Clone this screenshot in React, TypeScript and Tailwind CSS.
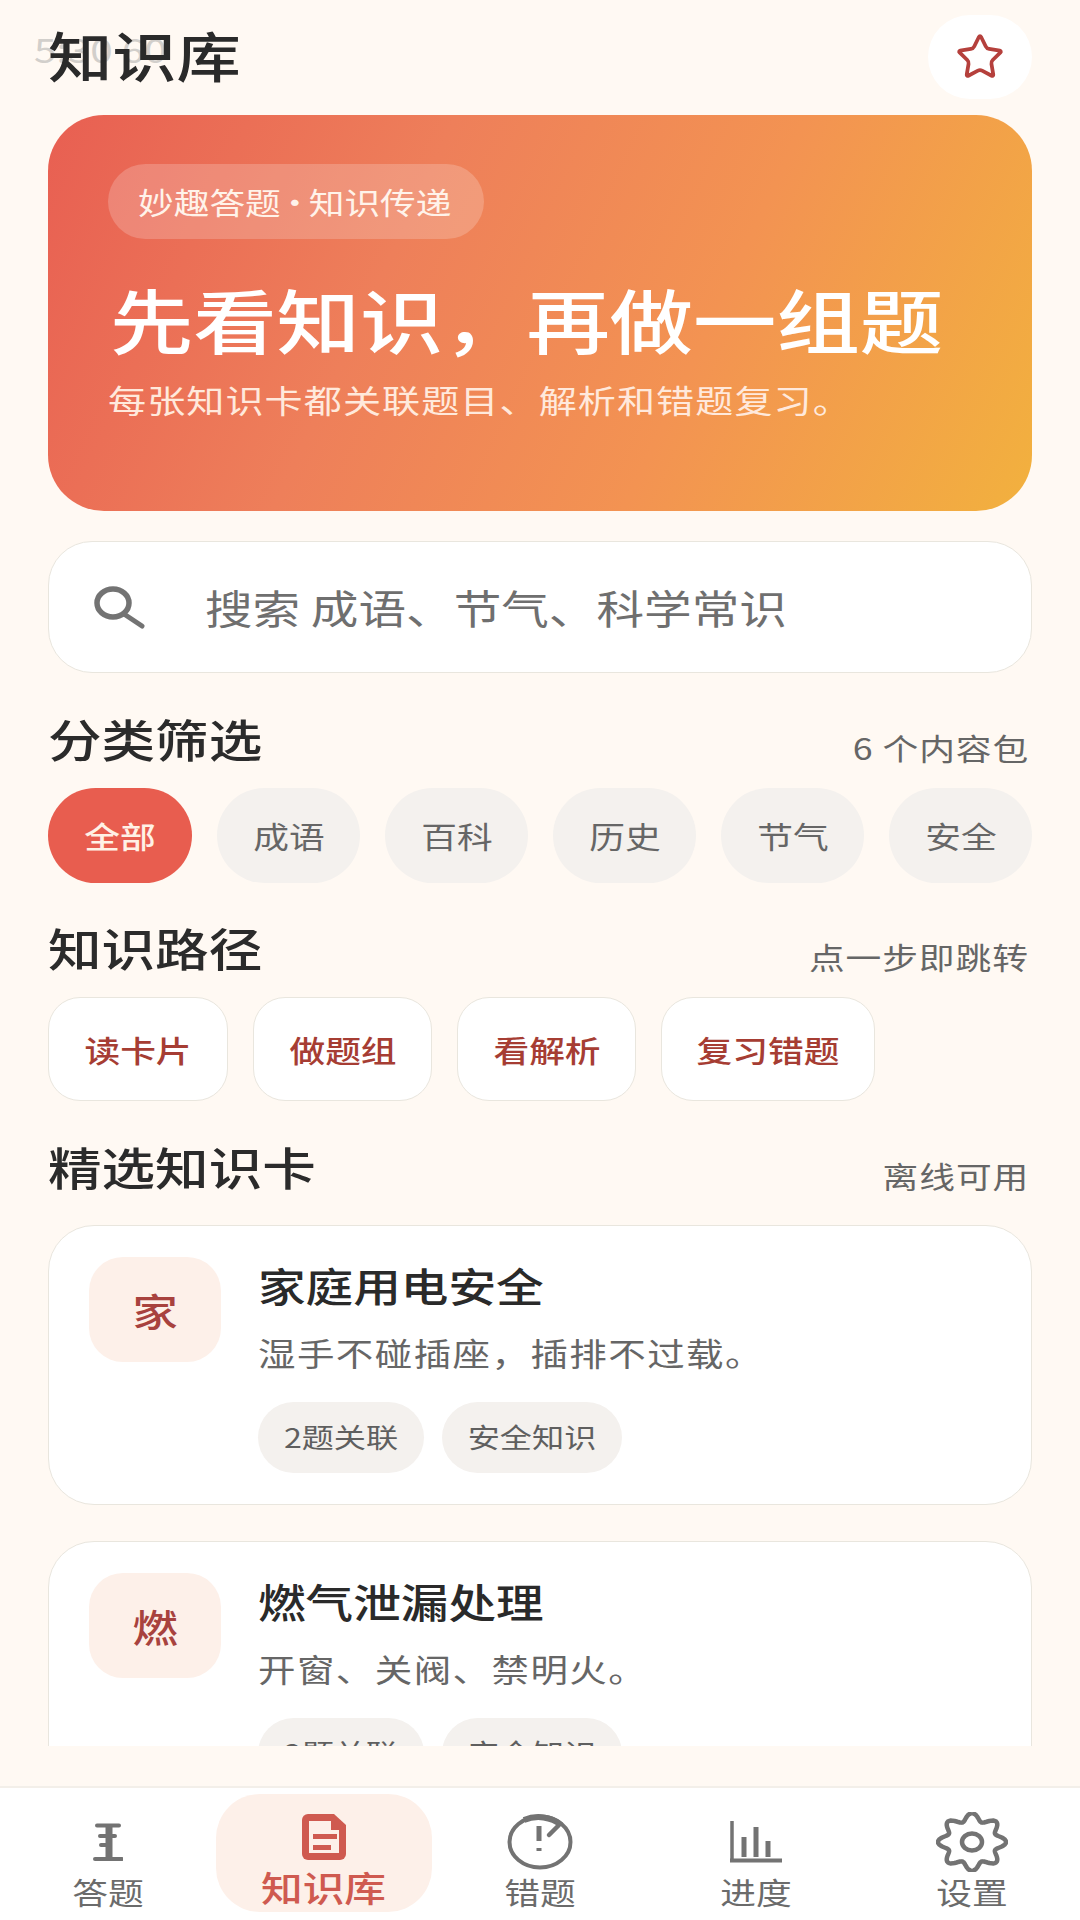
import React from "react";
import { Star } from "lucide-react";

const CJK = "font-['Noto_Sans_CJK_SC','Noto_Sans',sans-serif]";

const filters = ["全部", "成语", "百科", "历史", "节气", "安全"];
const steps = [
  { name: "读卡片", width: "w-[180px]" },
  { name: "做题组", width: "w-[179px]" },
  { name: "看解析", width: "w-[179px]" },
  { name: "复习错题", width: "w-[214px]" },
];
const cards = [
  { mark: "家", title: "家庭用电安全", desc: "湿手不碰插座，插排不过载。" },
  { mark: "燃", title: "燃气泄漏处理", desc: "开窗、关阀、禁明火。" },
];

// the text in this design runs wider than the font's normal proportions
const Wide = ({ children, className = "origin-left" }: { children: React.ReactNode; className?: string }) => (
  <span className={`inline-block whitespace-nowrap scale-x-[1.19] ${className}`}>{children}</span>
);

const SectionHead = ({ title, note }: { title: string; note: string }) => (
  <div className="flex items-end justify-between">
    <h2 className="text-[45px] leading-[60px] font-medium text-[#2b2b2b]">
      <Wide>{title}</Wide>
    </h2>
    <span className="text-[30px] leading-[40px] text-[#666] tracking-[0.8px] pr-[3px] pb-[2px]">
      <Wide className="origin-right">{note}</Wide>
    </span>
  </div>
);

const SearchIcon = () => (
  <svg width="54" height="44" viewBox="0 0 54 44" fill="none" stroke="#737373" strokeLinecap="round">
    <ellipse cx="20" cy="18" rx="16" ry="14" strokeWidth="5.5" />
    <path d="M31 29l18 12" strokeWidth="5" />
  </svg>
);

const QuizIcon = () => (
  <svg width="30" height="38" viewBox="0 0 30 38" fill="none" stroke="#737373" strokeLinecap="round">
    <path d="M4 2.5h22" strokeWidth="4" />
    <path d="M16 3v33" strokeWidth="7" strokeLinecap="butt" />
    <path d="M7 13h15M8 22h8" strokeWidth="4" />
    <path d="M2 36h27" strokeWidth="4" />
  </svg>
);

const DocIcon = () => (
  <svg width="44" height="46" viewBox="0 0 44 46" fill="none">
    <path d="M6 0h26l12 11v29a6 6 0 0 1-6 6H6a6 6 0 0 1-6-6V6a6 6 0 0 1 6-6z" fill="#cf5a50" />
    <path d="M7 7h22v9h8v23H7z" fill="#fdf0e9" />
    <path d="M11 20h24v5H11zM11 31h18v5H11z" fill="#cf5a50" />
  </svg>
);

const MistakeIcon = () => (
  <svg width="68" height="56" viewBox="0 0 68 56" fill="none" stroke="#737373" strokeLinecap="round">
    <ellipse cx="34" cy="28" rx="30.5" ry="25.5" strokeWidth="4" />
    <path d="M33 12v15M33 34v3" strokeWidth="5" strokeLinecap="butt" />
    <path d="M43 21l10-10" strokeWidth="4.5" />
    <path d="M18 6a31 25 0 0 1 37 5" strokeWidth="6" strokeLinecap="butt" />
  </svg>
);

const BarsIcon = () => (
  <svg width="54" height="42" viewBox="0 0 54 42" fill="none" stroke="#737373">
    <path d="M3 0v39" strokeWidth="3.5" />
    <path d="M15 16v20M27 6v30M39 20v16" strokeWidth="5" />
    <path d="M1 39.5h52" strokeWidth="4" />
  </svg>
);

// eight rounded lobes, squashed a little like the rest of the picture
const gearPath = Array.from({ length: 145 }, (_, i) => {
  const t = (i / 144) * Math.PI * 2;
  const r = 1 + 0.155 * Math.cos(8 * t);
  const x = 36 + 29.5 * r * Math.sin(t);
  const y = 30 - 25 * r * Math.cos(t);
  return `${i === 0 ? "M" : "L"}${x.toFixed(2)} ${y.toFixed(2)}`;
}).join("");

const GearIcon = () => (
  <svg width="72" height="60" viewBox="0 0 72 60" fill="none" stroke="#737373">
    <path d={gearPath} strokeWidth="4.5" strokeLinejoin="round" />
    <ellipse cx="36" cy="30" rx="10" ry="8.5" strokeWidth="4.5" />
  </svg>
);

const navItems = [
  { label: "答题", icon: <QuizIcon /> },
  { label: "知识库", icon: <DocIcon />, active: true },
  { label: "错题", icon: <MistakeIcon /> },
  { label: "进度", icon: <BarsIcon /> },
  { label: "设置", icon: <GearIcon /> },
];

export default function App() {
  return (
    <div className={`${CJK} relative w-[1080px] h-[1920px] overflow-hidden bg-[#fff9f3] flex flex-col`}>
      {/* leftover status bar time under the title */}
      <span className="absolute left-[34px] top-[27px] text-[34px] leading-[44px] text-[#d2cfcb]">
        <Wide>5:30 60</Wide>
      </span>

      <div className="h-[1746px] overflow-hidden px-[48px] shrink-0 relative">
        <header className="flex items-center justify-between h-[115px]">
          <h1 className="text-[54px] leading-[64px] font-medium text-[#2a2a2a] mt-[-6px]">
            <Wide>知识库</Wide>
          </h1>
          <button className="w-[104px] h-[84px] rounded-full bg-white flex items-center justify-center mt-[-1px]">
            <Star size={50} strokeWidth={1.8} color="#b5403c" />
          </button>
        </header>

        <section className="h-[396px] rounded-[56px] px-[60px] pt-[49px] bg-[linear-gradient(115deg,#e85f52_0%,#ee7f5a_35%,#f39352_65%,#f2b13e_100%)]">
          <span className="inline-flex items-center w-[376px] h-[75px] pl-[30px] rounded-full bg-white/20 text-[30px] [word-spacing:-10px] text-[#fff3ea]">
            <Wide>妙趣答题 · 知识传递</Wide>
          </span>
          <h2 className="mt-[38px] text-[70px] leading-[84px] font-medium text-white ml-[2px]">
            <Wide>先看知识，再做一组题</Wide>
          </h2>
          <p className="mt-[16px] text-[32px] leading-[44px] tracking-[0.9px] text-[#ffe9dc]">
            <Wide>每张知识卡都关联题目、解析和错题复习。</Wide>
          </p>
        </section>

        <div className="mt-[30px] h-[132px] rounded-[44px] bg-white border-[1.5px] border-[#e9e6de] flex items-center pl-[44px]">
          <SearchIcon />
          <span className="ml-[58px] text-[40px] text-[#6f6f6f]">
            <Wide>搜索 成语、节气、科学常识</Wide>
          </span>
        </div>

        <div className="mt-[36px]">
          <SectionHead title="分类筛选" note="6 个内容包" />
        </div>
        <div className="mt-[19px] flex justify-between">
          {filters.map((name, i) => (
            <span
              key={name}
              className={
                i === 0
                  ? "w-[144px] h-[95px] rounded-full flex items-center justify-center text-[30px] font-medium bg-[#e85d4f] text-[#fff1e6]"
                  : "w-[143px] h-[95px] rounded-full flex items-center justify-center text-[30px] bg-[#f4f1ee] text-[#666]"
              }
            >
              <Wide className="origin-center">{name}</Wide>
            </span>
          ))}
        </div>

        <div className="mt-[35px]">
          <SectionHead title="知识路径" note="点一步即跳转" />
        </div>
        <div className="mt-[19px] flex gap-[25px]">
          {steps.map((step) => (
            <span
              key={step.name}
              className={`${step.width} h-[104px] rounded-[32px] bg-white border-[1.5px] border-[#e9e6de] flex items-center justify-center text-[30px] font-medium text-[#a63d33]`}
            >
              <Wide className="origin-center">{step.name}</Wide>
            </span>
          ))}
        </div>

        <div className="mt-[36px]">
          <SectionHead title="精选知识卡" note="离线可用" />
        </div>
        <div className="mt-[28px] flex flex-col gap-[36px]">
          {cards.map((card) => (
            <article key={card.mark} className="h-[280px] shrink-0 rounded-[46px] bg-white border-[1.5px] border-[#e9e6de] pl-[40px] pt-[31px] flex">
              <div className="w-[132px] h-[105px] rounded-[34px] bg-[#fdf0e9] flex items-center justify-center text-[38px] font-medium text-[#a8423e]">
                <Wide className="origin-center">{card.mark}</Wide>
              </div>
              <div className="ml-[37px]">
                <h3 className="text-[40px] leading-[56px] font-medium text-[#2a2a2a]">
                  <Wide>{card.title}</Wide>
                </h3>
                <p className="mt-[17px] text-[31.5px] leading-[44px] tracking-[1.2px] text-[#666]">
                  <Wide>{card.desc}</Wide>
                </p>
                <div className="mt-[28px] flex gap-[18px]">
                  <span className="w-[166px] h-[71px] rounded-full bg-[#f4f1ee] flex items-center justify-center text-[27px] text-[#5f5f5f]">
                    <Wide className="origin-center">2题关联</Wide>
                  </span>
                  <span className="w-[180px] h-[71px] rounded-full bg-[#f4f1ee] flex items-center justify-center text-[27px] text-[#5f5f5f]">
                    <Wide className="origin-center">安全知识</Wide>
                  </span>
                </div>
              </div>
            </article>
          ))}
        </div>
      </div>

      <div className="h-[40px] shrink-0" />

      <nav className="flex-1 bg-white border-t-2 border-[#f3efe9] grid grid-cols-5 pt-[6px]">
        {navItems.map((item) => (
          <div
            key={item.label}
            className={
              item.active
                ? "h-[118px] rounded-[44px] bg-[#fdf0e9] flex flex-col items-center justify-end pb-[3px] text-[35px] leading-[44px] font-medium text-[#cf5a50]"
                : "flex flex-col items-center justify-end pb-[8px] text-[30px] leading-[42px] text-[#6b6b6b]"
            }
          >
            <div className="h-[56px] flex items-center justify-center">{item.icon}</div>
            <Wide className="origin-center">{item.label}</Wide>
          </div>
        ))}
      </nav>
    </div>
  );
}
